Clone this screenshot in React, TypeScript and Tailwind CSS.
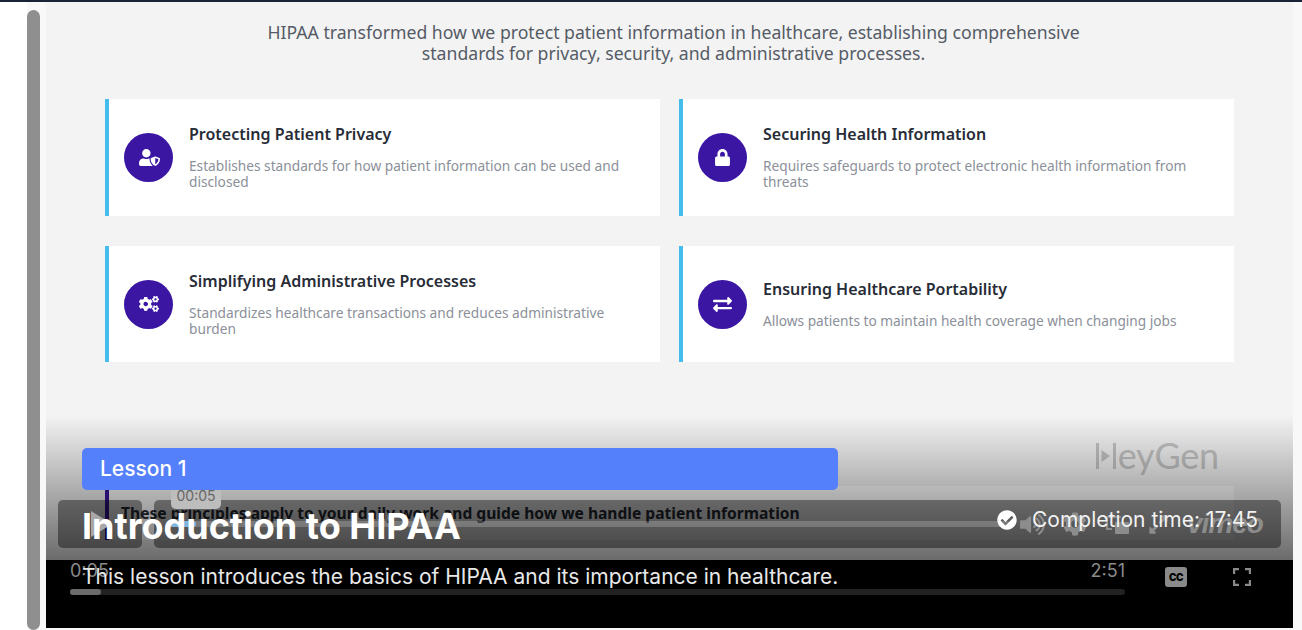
import { FaCheckCircle, FaCog, FaCogs, FaExchangeAlt, FaExpandAlt, FaLock, FaUserShield, FaVolumeUp } from "react-icons/fa";

const cards = [
  {
    title: "Protecting Patient Privacy",
    body: "Establishes standards for how patient information can be used and disclosed",
    icon: <FaUserShield className="ml-0.5 text-[21px]" />,
  },
  {
    title: "Securing Health Information",
    body: "Requires safeguards to protect electronic health information from threats",
    icon: <FaLock className="text-[17px]" />,
  },
  {
    title: "Simplifying Administrative Processes",
    body: "Standardizes healthcare transactions and reduces administrative burden",
    icon: <FaCogs className="text-[20px]" />,
  },
  {
    title: "Ensuring Healthcare Portability",
    body: "Allows patients to maintain health coverage when changing jobs",
    icon: <FaExchangeAlt className="text-[19px]" />,
  },
];

function Card({ title, body, icon }: { title: string; body: string; icon: React.ReactNode }) {
  return (
    <div className="flex h-full items-center border-l-[4px] border-[#45bdec] bg-white pl-[15px] pr-[30px]">
      <div className="flex h-[49px] w-[49px] shrink-0 items-center justify-center rounded-full bg-[#3a16a3] text-white">
        {icon}
      </div>
      <div className="ml-[16px] -translate-y-[1.5px]">
        <h3 className="text-[16px] leading-[22px] font-semibold text-[#272c36]">{title}</h3>
        <p className="mt-[13px] text-[13.7px] leading-[16px] text-[#8b9099]">{body}</p>
      </div>
    </div>
  );
}

function Slide() {
  return (
    <div className="relative h-[558px] overflow-hidden bg-[#f3f3f3] pt-[20px] font-['Noto_Sans',sans-serif]">
      <p className="mx-auto w-[900px] translate-x-[4px] text-center text-[17.65px] leading-[21px] text-[#555b66]">
        HIPAA transformed how we protect patient information in healthcare, establishing comprehensive
        <br />
        standards for privacy, security, and administrative processes.
      </p>
      <div className="mt-[35px] ml-[59px] grid w-[1129px] grid-cols-2 grid-rows-[117px_116px] gap-x-[19px] gap-y-[30px]">
        {cards.map((c) => (
          <Card key={c.title} title={c.title} body={c.body} icon={c.icon} />
        ))}
      </div>
      {/* HeyGen watermark */}
      <div className="mt-[77px] mr-[74px] flex items-start justify-end text-[#c4c4c4]">
        <svg className="mt-[3px]" width="23" height="28" viewBox="0 0 23 28" fill="currentColor">
          <rect x="1" y="1" width="3" height="26" />
          <path d="M6.5 8 L15 14 L6.5 20 Z" />
          <rect x="18" y="1" width="3" height="26" />
        </svg>
        <span className="font-['Lato',sans-serif] text-[36px] leading-[33px] font-normal tracking-[-0.2px]">eyGen</span>
      </div>
      <div className="mt-[14px] ml-[59px] flex h-[54px] w-[1129px] border-l-[4px] border-[#3a16a3] bg-white pl-[12px]">
        <p className="pt-[17px] text-[15.6px] leading-[20px] font-bold text-[#272c36]">
          These principles apply to your daily work and guide how we handle patient information
        </p>
      </div>
      <div className="absolute inset-x-0 bottom-0 h-[145px] bg-gradient-to-b from-black/0 to-black/56" />
    </div>
  );
}

function VimeoControls() {
  return (
    <div className="absolute top-[498px] left-[12px] flex h-[48px] w-[1223px] gap-[12px]">
      <div className="flex w-[84px] shrink-0 items-center justify-center rounded-[5px] bg-black/40">
        <svg width="26" height="30" viewBox="0 0 26 30" fill="#a8a8a8">
          <path d="M4 2 L25 15 L4 28 Z" />
        </svg>
      </div>
      <div className="relative flex min-w-0 flex-1 items-center rounded-[5px] bg-black/40 pr-[16px] pl-[16px]">
        <div className="h-[6px] w-[840px] shrink-0 rounded-sm bg-white/20">
          <div className="h-full w-[26px] rounded-sm bg-[#7fb4dc]" />
        </div>
        <div className="ml-[10px] flex items-center gap-[18px] text-[#8c8c8c]">
          <FaVolumeUp className="shrink-0 text-[25px]" />
          <FaCog className="shrink-0 text-[24px]" />
          <svg className="shrink-0" width="25" height="22" viewBox="0 0 25 22" fill="currentColor">
            <path d="M1 3 H16 V5 H3 V15 H7 V17 H1 Z" />
            <rect x="10" y="9" width="14" height="12" rx="1" />
          </svg>
          <FaExpandAlt className="shrink-0 text-[21px]" />
          <span className="font-['Liberation_Sans',sans-serif] text-[28px] leading-none font-bold tracking-[-1px] italic">vimeo</span>
        </div>
        <div className="absolute -top-[18px] left-[17px] flex h-[27px] w-[50px] items-center justify-center rounded-b-[5px] bg-[#bdbdbd] font-['Inter',sans-serif] text-[14px] text-[#666]">
          00:05
        </div>
      </div>
    </div>
  );
}

function PlayerBar() {
  return (
    <div className="relative h-[68px] bg-black font-['Inter',sans-serif] text-[#8a8a8a]">
      <div className="flex items-start pt-[1px] pl-[24px]">
        <div className="w-[1055px]">
          <div className="flex justify-between text-[18px] leading-[20px]">
            <span>0:05</span>
            <span>2:51</span>
          </div>
          <div className="mt-[8px] h-[6px] rounded-full bg-[#222]">
            <div className="h-full w-[31px] rounded-full bg-[#6b6b6b]" />
          </div>
        </div>
        <div className="mt-[6px] ml-[40px] flex h-[20px] w-[22px] items-center justify-center rounded-[3px] bg-[#8a8a8a] text-[10px] leading-none font-black tracking-[-0.5px] text-black">
          CC
        </div>
        <svg className="mt-[7px] ml-[46px]" width="18" height="18" viewBox="0 0 18 18" fill="none" stroke="#8a8a8a" strokeWidth="2.4">
          <path d="M1 6 V1 H6 M12 1 H17 V6 M17 12 V17 H12 M6 17 H1 V12" />
        </svg>
      </div>
    </div>
  );
}

function LessonOverlay() {
  return (
    <div className="absolute inset-x-[-46px] bottom-0 h-[213px] font-['Inter',sans-serif] text-white">
      <div className="absolute top-[33px] left-[82px] flex h-[42px] w-[756px] items-center rounded-[5px] bg-[#5580fb] px-[18px] text-[21px] font-medium">
        Lesson 1
      </div>
      <h1 className="absolute top-[87px] left-[82px] text-[36px] leading-[48px] font-bold">Introduction to HIPAA</h1>
      <p className="absolute top-[148px] left-[82px] text-[21px] leading-[28px] text-[#e8e8e8]">
        This lesson introduces the basics of HIPAA and its importance in healthcare.
      </p>
      <div className="absolute top-[91px] left-[997px] flex items-center gap-[15px] text-[21px] leading-[28px] text-[#f2f2f2]">
        <FaCheckCircle className="text-[20px] text-white" />
        <span>Completion time: 17:45</span>
      </div>
    </div>
  );
}

export default function App() {
  return (
    <div className="h-[630px] w-[1302px] overflow-hidden bg-white">
      <div className="h-[2px] bg-[#1a2238]" />
      <div className="flex h-[628px] bg-[#f8f8f8]">
        <div className="w-[27px] bg-white" />
        <div className="mt-[8px] h-[620px] w-[13px] rounded-full bg-[#8f8f8f]" />
        <div className="relative ml-[6px] h-[626px] w-[1247px] shrink-0 overflow-hidden">
          <Slide />
          <PlayerBar />
          <VimeoControls />
          <LessonOverlay />
        </div>
      </div>
    </div>
  );
}
